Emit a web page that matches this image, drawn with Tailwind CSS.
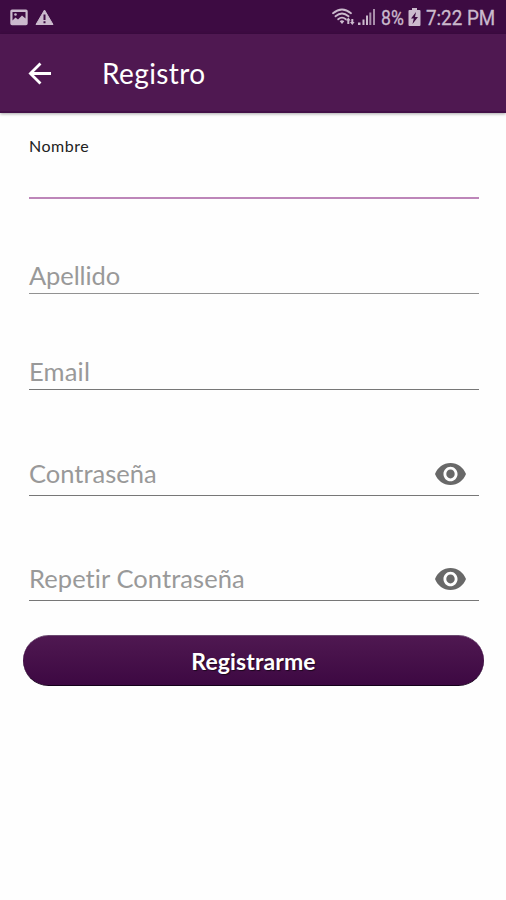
<!DOCTYPE html>
<html lang="es">
<head>
<meta charset="utf-8">
<title>Registro</title>
<script src="https://cdn.jsdelivr.net/npm/@tailwindcss/browser@4"></script>
</head>
<body class="flex h-[900px] w-[506px] flex-col overflow-hidden bg-[#fefefe] font-['Lato',sans-serif] [font-variant-ligatures:none]">
  <!-- Status bar -->
  <div class="flex h-[34px] shrink-0 items-center bg-[#3d0b42] pl-[10px] pr-[10px] text-[#cbbacd]">
    <svg class="h-[17px] w-[18px]" viewBox="0 0 18 17"><path fill="currentColor" fill-rule="evenodd" d="M2 .5h14A1.700 1.700 0 0 1 17.700 2.200v12.300A1.700 1.700 0 0 1 16 16.200H2A1.700 1.700 0 0 1 .3 14.500V2.200A1.700 1.700 0 0 1 2 .5zM2.500 3v8.500l3-3 2.500 2 4-4 3.500 3V3z"/><circle cx="5.500" cy="5.500" r="1.300" fill="currentColor"/></svg>
    <svg class="ml-[7px] h-[17px] w-[19px]" viewBox="0 0 19 17"><path fill="currentColor" stroke="currentColor" stroke-linejoin="round" d="M9.500 1 18 15.500H1z"/><path fill="#3d0b42" d="M8.500 5.500h2V11h-2zM8.500 12.200h2v2h-2z"/></svg>
    <div class="ml-auto flex items-center">
      <svg class="h-[18px] w-[23px]" viewBox="0 0 23 18" fill="none" stroke="currentColor" stroke-width="1.800" stroke-linecap="round"><path d="M1 5.200Q10 -2.300 19 5.200M3.500 8.300Q10 2.800 16.500 8.300M6.200 11.300Q10 8 13.800 11.300"/><path fill="currentColor" stroke="none" d="M7.700 13.200Q10 11.300 12.300 13.200L10 16zM16.300 9.500l2.300 3h-1.300v3.500h-2v-3.500H14zM20.300 17l-2.300-3h1.300v-3h2v3h1.300z"/></svg>
      <svg class="ml-[2px] h-[18px] w-[19px]" viewBox="0 0 19 18" fill="currentColor"><path d="M1 14.500h2.500V17H1zM5.500 11.500h2V17h-2zM9 7.500h2V17H9z"/><path d="M12.300 4.500h2V17h-2zM16 1h2v16h-2z" opacity=".75"/></svg>
      <span class="ml-[5px] mt-px w-[24px] origin-left scale-x-[.88] whitespace-nowrap font-['Roboto',sans-serif] text-[20px] leading-none [-webkit-text-stroke:0.3px]">8%</span>
      <svg class="ml-[3px] h-[18px] w-[13px]" viewBox="0 0 13 18"><path fill="currentColor" d="M4 0h5v2h2.500a1 1 0 0 1 1 1v14a1 1 0 0 1-1 1h-10a1 1 0 0 1-1-1V3a1 1 0 0 1 1-1H4z"/><path fill="#3d0b42" d="M8 4 3 10.500h2.800L4.500 16 10 9H7z"/></svg>
      <span class="ml-[5px] mt-px w-[70px] origin-left scale-x-[.94] whitespace-nowrap font-['Roboto',sans-serif] text-[20px] leading-none [-webkit-text-stroke:0.3px]">7:22 PM</span>
    </div>
  </div>

  <!-- App bar -->
  <header class="z-10 flex h-[79px] shrink-0 items-center border-b-2 border-[#431047] bg-[#4f1851] pl-[28px] text-white shadow-[0_1px_3px_rgba(0,0,0,0.35)]">
    <svg class="mt-px h-[23px] w-[24px]" viewBox="0 0 24 24" fill="none" stroke="currentColor" stroke-width="2.900"><path d="M12.500 1.500 2 12l10.500 10.500M2 12h21.500"/></svg>
    <h1 class="ml-[50px] text-[28px] leading-none tracking-[0.4px]">Registro</h1>
  </header>

  <!-- Form -->
  <main class="flex flex-col pr-[27px] pl-[29px] text-[25.500px] leading-[32px] text-[#999999]">
    <div class="h-[86px] border-b-2 border-[#bd86b9] pt-[23px] text-[16px] leading-[20px] tracking-[0.500px] text-[#222222]">Nombre</div>
    <div class="flex h-[95px] items-end border-b border-[#929292] pb-[2px] tracking-[-0.100px]">Apellido</div>
    <div class="flex h-[96px] items-end border-b border-[#777777] pb-[2px] tracking-[0.200px]">Email</div>
    <div class="flex h-[106px] items-end justify-between border-b border-[#777777] pr-[13px] pb-[6px]">
      <span>Contraseña</span>
      <svg class="mb-[4px] h-[22px] w-[31px]" viewBox="1 4.500 22 15" preserveAspectRatio="none" fill="#686868"><path d="M12 4.500C7 4.500 2.730 7.610 1 12c1.730 4.390 6 7.500 11 7.500s9.270-3.110 11-7.500c-1.730-4.390-6-7.500-11-7.500zM12 17c-2.760 0-5-2.240-5-5s2.240-5 5-5 5 2.240 5 5-2.240 5-5 5zm0-8c-1.660 0-3 1.340-3 3s1.340 3 3 3 3-1.340 3-3-1.340-3-3-3z"/></svg>
    </div>
    <div class="flex h-[105px] items-end justify-between border-b border-[#777777] pr-[13px] pb-[6px]">
      <span class="tracking-[0.080px]">Repetir Contraseña</span>
      <svg class="mb-[4px] h-[22px] w-[31px]" viewBox="1 4.500 22 15" preserveAspectRatio="none" fill="#686868"><path d="M12 4.500C7 4.500 2.730 7.610 1 12c1.730 4.390 6 7.500 11 7.500s9.270-3.110 11-7.500c-1.730-4.390-6-7.500-11-7.500zM12 17c-2.760 0-5-2.240-5-5s2.240-5 5-5 5 2.240 5 5-2.240 5-5 5zm0-8c-1.660 0-3 1.340-3 3s1.340 3 3 3 3-1.340 3-3-1.340-3-3-3z"/></svg>
    </div>
  </main>
  <button class="mt-[34px] ml-[23px] h-[51px] w-[461px] shrink-0 rounded-full border-t border-b border-t-[#6b4970] border-b-[#14001a] bg-linear-to-b from-[#4f1851] to-[#3d0842] pt-px text-[23px] leading-none font-bold tracking-[0.100px] text-white [text-shadow:1px_1px_1px_rgba(0,0,0,0.6)]">Registrarme</button>
</body>
</html>
